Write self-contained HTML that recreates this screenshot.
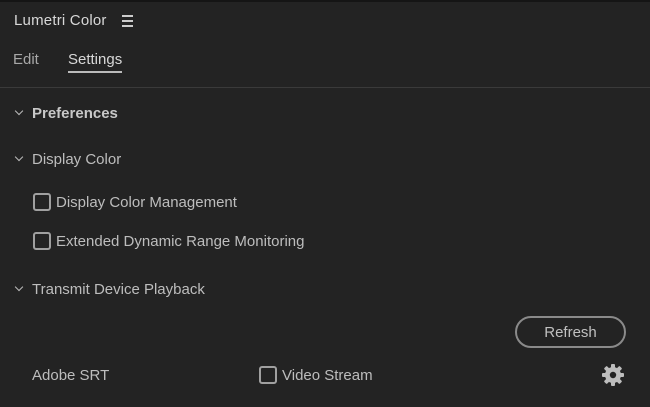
<!DOCTYPE html><html><head><style>
body{margin:0;width:650px;height:407px;background:#232323;font-family:"Liberation Sans",sans-serif;color:#bdbdbd;position:relative;overflow:hidden}
.t{position:absolute;font-size:15px;white-space:nowrap;line-height:18px}
.cb{position:absolute;width:14px;height:14px;border:2px solid #a0a0a0;border-radius:3px}
.ch{position:absolute;width:5px;height:5px;border-right:1.6px solid #bbb;border-bottom:1.6px solid #bbb;transform:rotate(45deg)}
</style></head><body>
<div style="position:absolute;left:0;top:0;width:650px;height:2px;background:#151515"></div>
<div class="t" style="left:14px;top:12px;color:#d8d8d8;letter-spacing:0.2px">Lumetri Color</div>
<div style="position:absolute;left:122px;top:15px;width:11px;height:1.5px;background:#ccc;box-shadow:0 5px 0 #ccc,0 10px 0 #ccc"></div>
<div class="t" style="left:13px;top:51px;color:#a8a8a8">Edit</div>
<div class="t" style="left:68px;top:51px;color:#d8d8d8">Settings</div>
<div style="position:absolute;left:68px;top:71px;width:54px;height:2px;background:#bbb"></div>
<div style="position:absolute;left:0;top:87px;width:650px;height:1px;background:#3a3a3a"></div>
<div class="ch" style="left:16px;top:108px"></div>
<div class="t" style="left:32px;top:105px;font-weight:bold;color:#c8c8c8">Preferences</div>
<div class="ch" style="left:16px;top:154px"></div>
<div class="t" style="left:32px;top:151px">Display Color</div>
<div class="cb" style="left:33px;top:193px"></div>
<div class="t" style="left:56px;top:194px">Display Color Management</div>
<div class="cb" style="left:33px;top:232px"></div>
<div class="t" style="left:56px;top:233px">Extended Dynamic Range Monitoring</div>
<div class="ch" style="left:16px;top:284px"></div>
<div class="t" style="left:32px;top:281px">Transmit Device Playback</div>
<div style="position:absolute;left:515px;top:316px;width:107px;height:28px;border:2px solid #8a8a8a;border-radius:16px"></div>
<div class="t" style="left:515px;top:324px;width:111px;text-align:center;color:#c0c0c0">Refresh</div>
<div class="t" style="left:32px;top:367px">Adobe SRT</div>
<div class="cb" style="left:259px;top:366px"></div>
<div class="t" style="left:282px;top:367px">Video Stream</div>
<svg style="position:absolute;left:601px;top:363px" width="24" height="24" viewBox="0 0 24 24"><g fill="#bdbdbd"><circle cx="12" cy="12" r="8"/><g id="a"><rect x="10" y="1" width="4" height="22" rx="1"/></g><use href="#a" transform="rotate(45 12 12)"/><use href="#a" transform="rotate(90 12 12)"/><use href="#a" transform="rotate(135 12 12)"/></g><circle cx="12" cy="12" r="3.2" fill="#232323"/></svg>
</body></html>
